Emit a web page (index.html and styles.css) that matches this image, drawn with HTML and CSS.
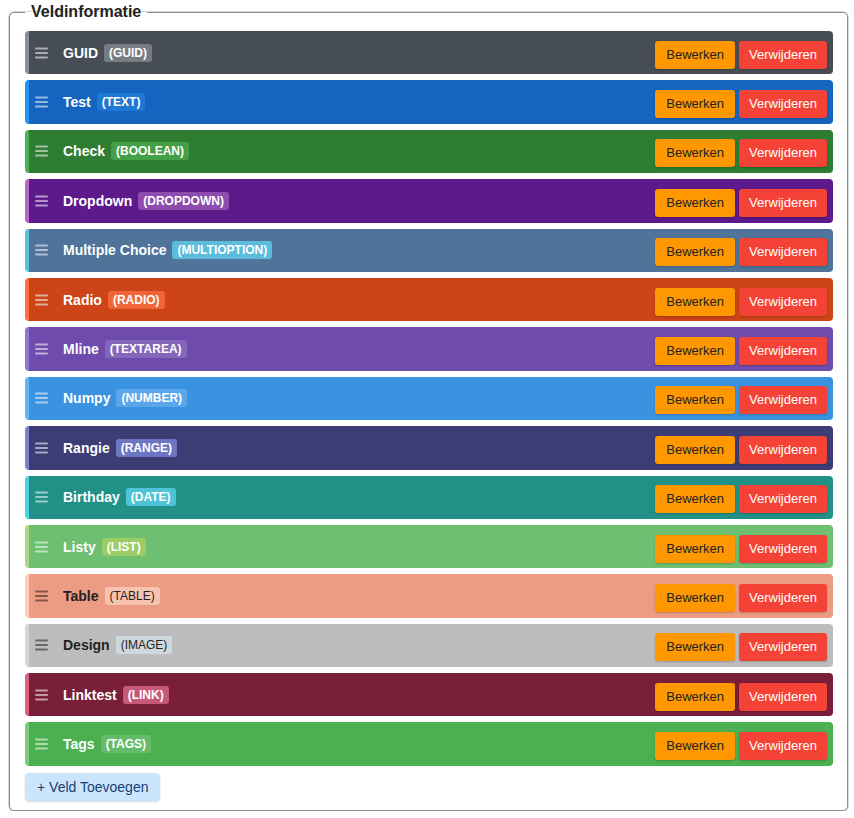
FILE: index.html
```html
<!DOCTYPE html>
<html lang="nl">
<head>
<meta charset="utf-8">
<title>Veldinformatie</title>
<link rel="stylesheet" href="styles.css">
</head>
<body>
<fieldset class="panel">
  <legend class="panel-title">Veldinformatie</legend>
  <div class="rows">
    <div class="row c-guid"><span class="handle"><svg width="13" height="12" viewBox="0 0 13 12"><rect x="0" y="0.5" width="13" height="2" rx="1"/><rect x="0" y="5" width="13" height="2" rx="1"/><rect x="0" y="9.5" width="13" height="2" rx="1"/></svg></span><span class="name">GUID</span><span class="badge">(GUID)</span><span class="actions"><button class="btn edit">Bewerken</button><button class="btn del">Verwijderen</button></span></div>
    <div class="row c-text"><span class="handle"><svg width="13" height="12" viewBox="0 0 13 12"><rect x="0" y="0.5" width="13" height="2" rx="1"/><rect x="0" y="5" width="13" height="2" rx="1"/><rect x="0" y="9.5" width="13" height="2" rx="1"/></svg></span><span class="name">Test</span><span class="badge">(TEXT)</span><span class="actions"><button class="btn edit">Bewerken</button><button class="btn del">Verwijderen</button></span></div>
    <div class="row c-bool"><span class="handle"><svg width="13" height="12" viewBox="0 0 13 12"><rect x="0" y="0.5" width="13" height="2" rx="1"/><rect x="0" y="5" width="13" height="2" rx="1"/><rect x="0" y="9.5" width="13" height="2" rx="1"/></svg></span><span class="name">Check</span><span class="badge">(BOOLEAN)</span><span class="actions"><button class="btn edit">Bewerken</button><button class="btn del">Verwijderen</button></span></div>
    <div class="row c-drop"><span class="handle"><svg width="13" height="12" viewBox="0 0 13 12"><rect x="0" y="0.5" width="13" height="2" rx="1"/><rect x="0" y="5" width="13" height="2" rx="1"/><rect x="0" y="9.5" width="13" height="2" rx="1"/></svg></span><span class="name">Dropdown</span><span class="badge">(DROPDOWN)</span><span class="actions"><button class="btn edit">Bewerken</button><button class="btn del">Verwijderen</button></span></div>
    <div class="row c-multi"><span class="handle"><svg width="13" height="12" viewBox="0 0 13 12"><rect x="0" y="0.5" width="13" height="2" rx="1"/><rect x="0" y="5" width="13" height="2" rx="1"/><rect x="0" y="9.5" width="13" height="2" rx="1"/></svg></span><span class="name">Multiple Choice</span><span class="badge">(MULTIOPTION)</span><span class="actions"><button class="btn edit">Bewerken</button><button class="btn del">Verwijderen</button></span></div>
    <div class="row c-radio"><span class="handle"><svg width="13" height="12" viewBox="0 0 13 12"><rect x="0" y="0.5" width="13" height="2" rx="1"/><rect x="0" y="5" width="13" height="2" rx="1"/><rect x="0" y="9.5" width="13" height="2" rx="1"/></svg></span><span class="name">Radio</span><span class="badge">(RADIO)</span><span class="actions"><button class="btn edit">Bewerken</button><button class="btn del">Verwijderen</button></span></div>
    <div class="row c-area"><span class="handle"><svg width="13" height="12" viewBox="0 0 13 12"><rect x="0" y="0.5" width="13" height="2" rx="1"/><rect x="0" y="5" width="13" height="2" rx="1"/><rect x="0" y="9.5" width="13" height="2" rx="1"/></svg></span><span class="name">Mline</span><span class="badge">(TEXTAREA)</span><span class="actions"><button class="btn edit">Bewerken</button><button class="btn del">Verwijderen</button></span></div>
    <div class="row c-num"><span class="handle"><svg width="13" height="12" viewBox="0 0 13 12"><rect x="0" y="0.5" width="13" height="2" rx="1"/><rect x="0" y="5" width="13" height="2" rx="1"/><rect x="0" y="9.5" width="13" height="2" rx="1"/></svg></span><span class="name">Numpy</span><span class="badge">(NUMBER)</span><span class="actions"><button class="btn edit">Bewerken</button><button class="btn del">Verwijderen</button></span></div>
    <div class="row c-range"><span class="handle"><svg width="13" height="12" viewBox="0 0 13 12"><rect x="0" y="0.5" width="13" height="2" rx="1"/><rect x="0" y="5" width="13" height="2" rx="1"/><rect x="0" y="9.5" width="13" height="2" rx="1"/></svg></span><span class="name">Rangie</span><span class="badge">(RANGE)</span><span class="actions"><button class="btn edit">Bewerken</button><button class="btn del">Verwijderen</button></span></div>
    <div class="row c-date"><span class="handle"><svg width="13" height="12" viewBox="0 0 13 12"><rect x="0" y="0.5" width="13" height="2" rx="1"/><rect x="0" y="5" width="13" height="2" rx="1"/><rect x="0" y="9.5" width="13" height="2" rx="1"/></svg></span><span class="name">Birthday</span><span class="badge">(DATE)</span><span class="actions"><button class="btn edit">Bewerken</button><button class="btn del">Verwijderen</button></span></div>
    <div class="row c-list"><span class="handle"><svg width="13" height="12" viewBox="0 0 13 12"><rect x="0" y="0.5" width="13" height="2" rx="1"/><rect x="0" y="5" width="13" height="2" rx="1"/><rect x="0" y="9.5" width="13" height="2" rx="1"/></svg></span><span class="name">Listy</span><span class="badge">(LIST)</span><span class="actions"><button class="btn edit">Bewerken</button><button class="btn del">Verwijderen</button></span></div>
    <div class="row c-table light"><span class="handle"><svg width="13" height="12" viewBox="0 0 13 12"><rect x="0" y="0.5" width="13" height="2" rx="1"/><rect x="0" y="5" width="13" height="2" rx="1"/><rect x="0" y="9.5" width="13" height="2" rx="1"/></svg></span><span class="name">Table</span><span class="badge">(TABLE)</span><span class="actions"><button class="btn edit">Bewerken</button><button class="btn del">Verwijderen</button></span></div>
    <div class="row c-image light"><span class="handle"><svg width="13" height="12" viewBox="0 0 13 12"><rect x="0" y="0.5" width="13" height="2" rx="1"/><rect x="0" y="5" width="13" height="2" rx="1"/><rect x="0" y="9.5" width="13" height="2" rx="1"/></svg></span><span class="name">Design</span><span class="badge">(IMAGE)</span><span class="actions"><button class="btn edit">Bewerken</button><button class="btn del">Verwijderen</button></span></div>
    <div class="row c-link"><span class="handle"><svg width="13" height="12" viewBox="0 0 13 12"><rect x="0" y="0.5" width="13" height="2" rx="1"/><rect x="0" y="5" width="13" height="2" rx="1"/><rect x="0" y="9.5" width="13" height="2" rx="1"/></svg></span><span class="name">Linktest</span><span class="badge">(LINK)</span><span class="actions"><button class="btn edit">Bewerken</button><button class="btn del">Verwijderen</button></span></div>
    <div class="row c-tags"><span class="handle"><svg width="13" height="12" viewBox="0 0 13 12"><rect x="0" y="0.5" width="13" height="2" rx="1"/><rect x="0" y="5" width="13" height="2" rx="1"/><rect x="0" y="9.5" width="13" height="2" rx="1"/></svg></span><span class="name">Tags</span><span class="badge">(TAGS)</span><span class="actions"><button class="btn edit">Bewerken</button><button class="btn del">Verwijderen</button></span></div>
  </div>
  <button class="add-btn">+ Veld Toevoegen</button>
</fieldset>
</body>
</html>
```

FILE: styles.css
```css
html, body {
  margin: 0;
  padding: 0;
  background: #ffffff;
}
body {
  padding: 3px 6px 0 9px;
  font-family: "Liberation Sans", Arial, sans-serif;
  color: #222;
}
.panel {
  margin: 0;
  border: 1px solid #8c8c8c;
  border-radius: 5px;
  padding: 0 14px 9px 15px;
  box-shadow: 0 0 0 0.5px #b0b0b0;
}
.panel-title {
  font-size: 16px;
  font-weight: bold;
  padding: 0 6px;
  color: #222;
}
.rows {
  display: flex;
  flex-direction: column;
  gap: 6px;
  margin-top: 10px;
}
.row {
  display: flex;
  align-items: center;
  box-sizing: border-box;
  height: 43.4px;
  padding: 0 6px 0 6px;
  border-left: 4px solid;
  border-radius: 4px;
  color: #fff;
}
.handle {
  display: flex;
  width: 13px;
  height: 12px;
  margin-right: 15px;
}
.handle svg { fill: rgba(255, 255, 255, 0.55); }
.light .handle svg { fill: rgba(0, 0, 0, 0.45); }
.name {
  font-size: 14px;
  font-weight: bold;
}
.badge {
  margin-left: 6px;
  font-size: 12px;
  font-weight: bold;
  padding: 2px 5px;
  border-radius: 3px;
  line-height: 14px;
}
.light { color: #222; }
.light .badge { font-weight: normal; color: #222; }
.actions {
  margin-left: auto;
  margin-top: 4px;
  display: flex;
  gap: 4px;
}
.btn {
  font-family: "Liberation Sans", Arial, sans-serif;
  font-size: 13px;
  line-height: 16px;
  padding: 6px 10px;
  border: none;
  border-radius: 3px;
  box-shadow: 0 1px 2px rgba(0, 0, 0, 0.2);
}
.edit { background: #ff9800; color: #222; padding: 6px 11px; }
.del { background: #f44336; color: #fff; }

.c-guid { background: #474d54; border-left-color: #8b9096; }
.c-guid .badge { background: #787d83; }
.c-text { background: #1565c0; border-left-color: #2196f3; }
.c-text .badge { background: #1e78d4; }
.c-bool { background: #2e7d32; border-left-color: #4caf50; }
.c-bool .badge { background: #44a047; }
.c-drop { background: #5c1a8a; border-left-color: #ba68c8; }
.c-drop .badge { background: #8d4cae; }
.c-multi { background: #4f7399; border-left-color: #5bc0de; }
.c-multi .badge { background: #5bbcdc; }
.c-radio { background: #cc4418; border-left-color: #ff7043; }
.c-radio .badge { background: #f06638; }
.c-area { background: #6e4bad; border-left-color: #9575cd; }
.c-area .badge { background: #8466bb; }
.c-num { background: #3a93e0; border-left-color: #64b5f6; }
.c-num .badge { background: #5aa6ea; }
.c-range { background: #3c3d74; border-left-color: #7986cb; }
.c-range .badge { background: #6c76c2; }
.c-date { background: #219187; border-left-color: #4dd0e1; }
.c-date .badge { background: #4ec4d6; }
.c-list { background: #6ebf72; border-left-color: #aed581; }
.c-list .badge { background: #9ccc65; }
.c-table { background: #ec9c82; border-left-color: #ffccbc; }
.c-table .badge { background: #f7c2ae; }
.c-image { background: #bdbdbd; border-left-color: #cfd8dc; }
.c-image .badge { background: #cfd8dc; }
.c-link { background: #7a1f3a; border-left-color: #d9607f; }
.c-link .badge { background: #c7587a; }
.c-tags { background: #4caf50; border-left-color: #81c784; }
.c-tags .badge { background: #66bb6a; }

.add-btn {
  margin-top: 7px;
  font-family: "Liberation Sans", Arial, sans-serif;
  font-size: 14px;
  line-height: 16px;
  padding: 6px 12px;
  border: none;
  border-radius: 4px;
  background: #cce5ff;
  color: #17406e;
  box-shadow: 0 1px 2px rgba(0, 0, 0, 0.15);
}
```
